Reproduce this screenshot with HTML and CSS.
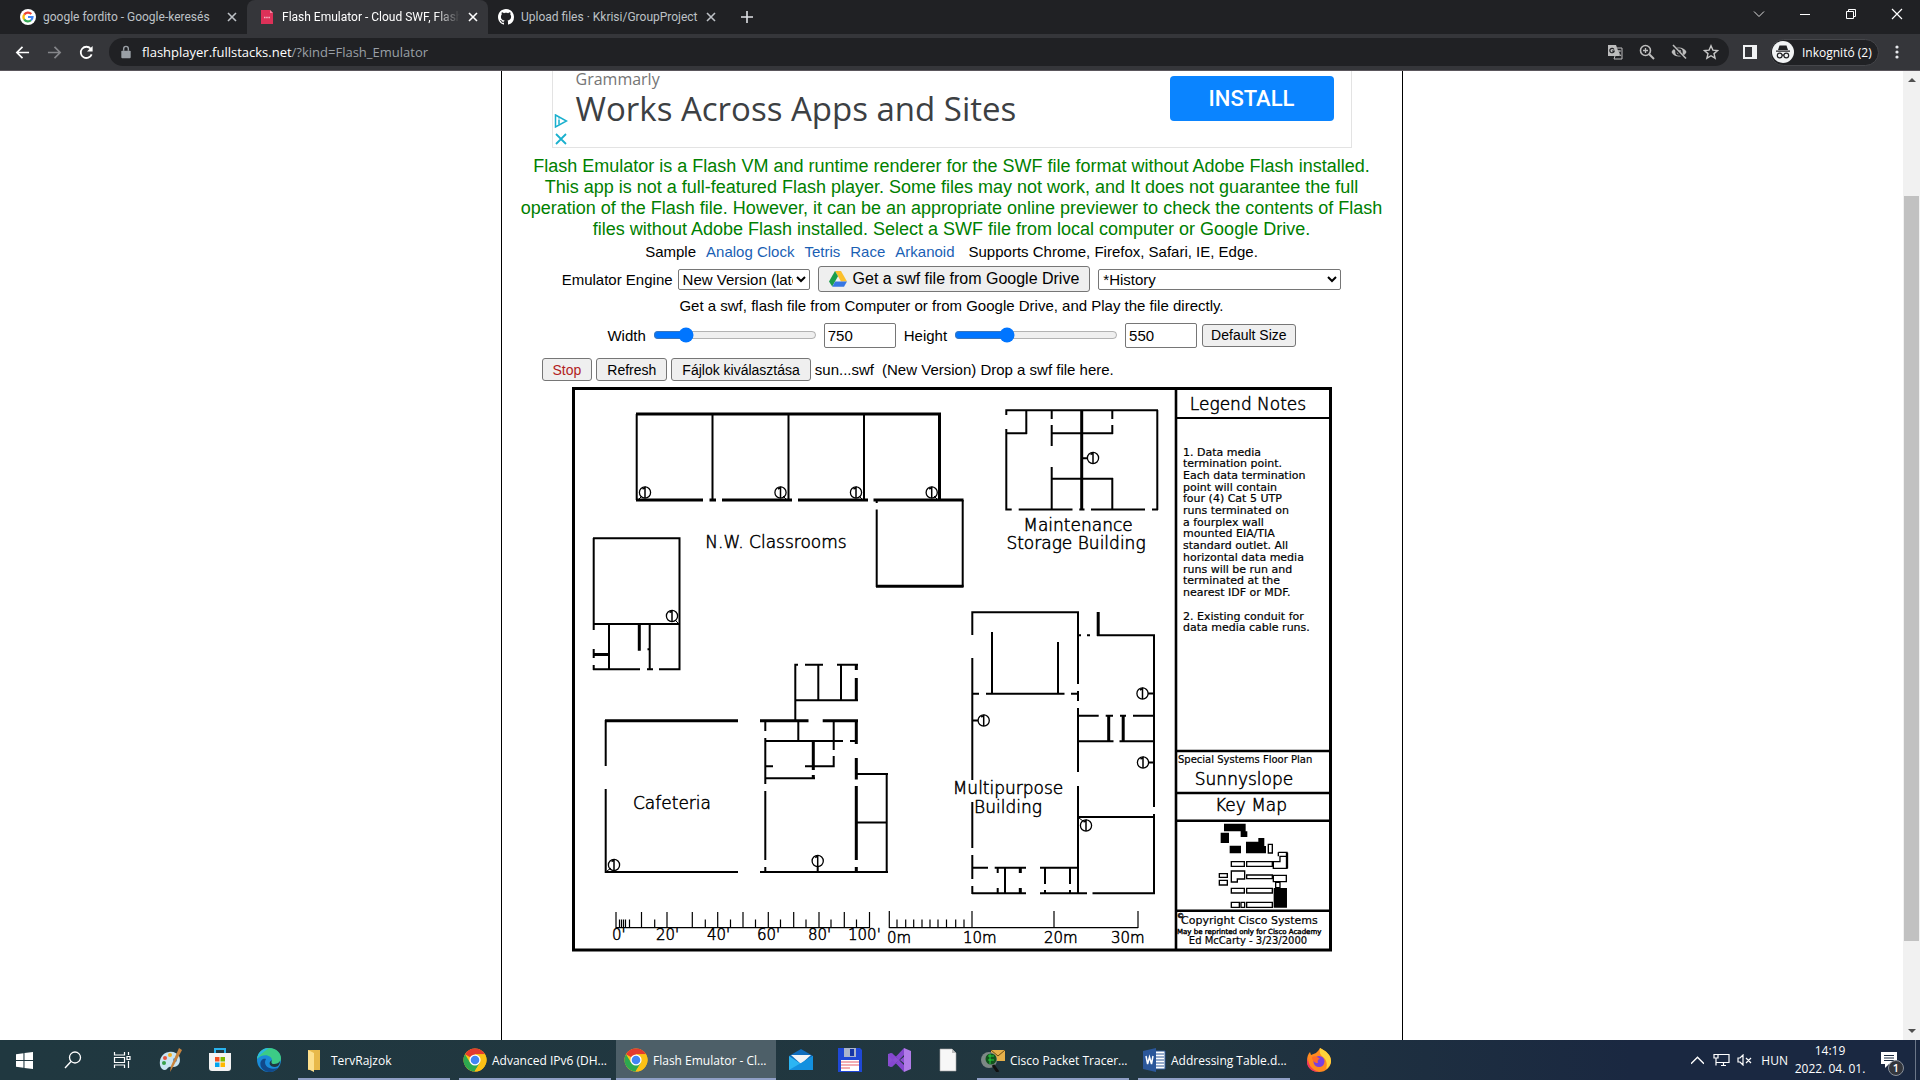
FILE: index.html
```html
<!DOCTYPE html>
<html lang="hu">
<head>
<meta charset="utf-8">
<title>Flash Emulator - Cloud SWF, Flash Player</title>
<link rel="stylesheet" href="styles.css">
</head>
<body>
<svg class="defs" aria-hidden="true">
  <symbol id="chrome" viewBox="0 0 24 24">
    <circle cx="12" cy="12" r="11.5" fill="#fbc116"/>
    <path d="M12 12 2 6.300A11.500 11.500 0 0 1 22 6.300H12z" fill="#e33b2e"/>
    <path d="M2 6.300A11.500 11.500 0 0 0 11.500 23.500L17 14.800 12 12 7.100 14.800z" fill="#2da94f"/>
    <path d="M12 6.300h10A11.500 11.500 0 0 1 11.500 23.500L17 14.800z" fill="#fbc116"/>
    <circle cx="12" cy="12" r="5.600" fill="#fff"/><circle cx="12" cy="12" r="4.300" fill="#4285f4"/>
  </symbol>
  <symbol id="x" viewBox="0 0 10 10"><path d="M1 1l8 8M9 1l-8 8" stroke="currentColor" stroke-width="1.600"/></symbol>
  <symbol id="sensor" viewBox="-8 -8 16 16"><circle r="5.600" fill="none" stroke="#000" stroke-width="1.300"/><path d="M-2.500-3.500 0-5V5.500" fill="none" stroke="#000" stroke-width="1.500"/></symbol>
</svg>

<header class="tabs">
  <div class="tab">
    <svg class="fav" viewBox="0 0 16 16"><circle cx="8" cy="8" r="8" fill="#fff"/><g fill="none" stroke-width="2.200"><path d="M4.200 5.600A4.500 4.500 0 0 1 11.300 5" stroke="#ea4335"/><path d="M4.200 10.400a4.500 4.500 0 0 1 0-4.800" stroke="#fbbc05"/><path d="M11 11.300a4.500 4.500 0 0 1-6.800-.9" stroke="#34a853"/><path d="M8 8h4.500A4.500 4.500 0 0 1 11 11.300" stroke="#4285f4"/></g></svg>
    <span class="tab-title">google fordito - Google-keresés</span>
    <button class="close" aria-label="Close tab"><svg><use href="#x"/></svg></button>
  </div>
  <div class="tab active">
    <svg class="fav" viewBox="0 0 16 16"><path d="M2 1h9l3 3v11H2z" fill="#dc3158"/><path d="M11 1v3h3z" fill="#f28aa2"/><path d="M5 8.500h6" stroke="#f5b5c4" stroke-width="1.500" stroke-dasharray="1.500 .7"/></svg>
    <span class="tab-title fade">Flash Emulator - Cloud SWF, Flash</span>
    <button class="close" aria-label="Close tab"><svg><use href="#x"/></svg></button>
  </div>
  <div class="tab last">
    <svg class="fav" viewBox="0 0 16 16"><path fill="#fff" d="M8 0C3.580 0 0 3.580 0 8c0 3.540 2.290 6.530 5.470 7.590.4.070.55-.17.55-.38 0-.19-.01-.82-.01-1.490-2.010.37-2.530-.49-2.690-.94-.09-.23-.48-.94-.82-1.130-.28-.15-.68-.52-.01-.53.63-.01 1.080.58 1.230.82.72 1.210 1.870.87 2.330.66.07-.52.28-.87.51-1.070-1.780-.2-3.640-.89-3.640-3.950 0-.87.31-1.590.82-2.150-.08-.2-.36-1.020.08-2.120 0 0 .67-.21 2.200.82.64-.18 1.320-.27 2-.27s1.360.09 2 .27c1.530-1.040 2.200-.82 2.200-.82.44 1.100.16 1.920.08 2.120.51.56.82 1.270.82 2.150 0 3.070-1.870 3.750-3.650 3.950.29.25.54.73.54 1.480 0 1.070-.01 1.930-.01 2.200 0 .21.15.46.55.38A8 8 0 0 0 16 8c0-4.420-3.580-8-8-8z"/></svg>
    <span class="tab-title">Upload files · Kkrisi/GroupProject</span>
    <button class="close" aria-label="Close tab"><svg><use href="#x"/></svg></button>
  </div>
  <button class="newtab" aria-label="New tab"><svg viewBox="0 0 12 12"><path d="M6 0v12M0 6h12" stroke="#dfe1e5" stroke-width="1.600"/></svg></button>
  <div class="winctl">
    <button aria-label="Search tabs"><svg viewBox="0 0 12 12"><path d="M1 3.500l5 5 5-5" fill="none" stroke="#ddd"/></svg></button>
    <button aria-label="Minimize"><svg viewBox="0 0 12 12"><path d="M1 6.500h10" stroke="#fff"/></svg></button>
    <button aria-label="Restore"><svg viewBox="0 0 12 12"><path d="M1.500 3.500h7v7h-7zM3.500 3.500v-2h7v7h-2" fill="none" stroke="#fff"/></svg></button>
    <button aria-label="Close"><svg viewBox="0 0 12 12"><path d="M1 1l10 10M11 1L1 11" stroke="#fff" stroke-width="1.200"/></svg></button>
  </div>
</header>

<nav class="toolbar">
  <button class="nav" aria-label="Back"><svg viewBox="0 0 16 16"><path d="M15 8H2M8 2L2 8l6 6" fill="none" stroke="#fff" stroke-width="1.800"/></svg></button>
  <button class="nav" aria-label="Forward"><svg viewBox="0 0 16 16"><path d="M1 8h13M8 2l6 6-6 6" fill="none" stroke="#85868a" stroke-width="1.800"/></svg></button>
  <button class="nav" aria-label="Reload"><svg viewBox="0 0 16 16"><path d="M13.500 10A6 6 0 1 1 12.500 4" fill="none" stroke="#fff" stroke-width="1.900"/><path d="M14.500 1v6h-6z" fill="#fff"/></svg></button>
  <div class="omni">
    <svg class="lock" viewBox="0 0 12 16"><rect x="1" y="6" width="10" height="8" rx="1" fill="#9aa0a6"/><path d="M3.500 6V4a2.500 2.500 0 0 1 5 0v2" fill="none" stroke="#9aa0a6" stroke-width="1.500"/></svg>
    <span class="url"><b>flashplayer.fullstacks.net</b>/?kind=Flash_Emulator</span>
    <div class="omni-icons">
      <svg viewBox="0 0 16 16"><path d="M1 1h8l4 11H1z" fill="#bdbdbd"/><path d="M10 4h5v11H7l1-3" fill="none" stroke="#bdbdbd"/><path d="M7 5.500A2.200 2.200 0 1 0 7.200 7H5" fill="none" stroke="#202124" stroke-width="1.200"/><path d="M10 7h4M12 6v1c0 2-1 3-2 4M11 8l3 4" fill="none" stroke="#bdbdbd"/></svg>
      <svg viewBox="0 0 16 16"><circle cx="6.500" cy="6.500" r="5" fill="none" stroke="#bdbdbd" stroke-width="1.600"/><path d="M10 10l5 5" stroke="#bdbdbd" stroke-width="2"/><path d="M6.500 4v5M4 6.500h5" stroke="#bdbdbd" stroke-width="1.300"/></svg>
      <svg viewBox="0 0 16 16"><path d="M.5 8C3 2 13 2 15.500 8 13 14 3 14 .5 8z" fill="#bdbdbd"/><circle cx="8" cy="8" r="3" fill="#bdbdbd" stroke="#202124" stroke-width="1.500"/><path d="M1 1l13.500 14" stroke="#202124" stroke-width="3"/><path d="M2 1l13 13.500" stroke="#bdbdbd" stroke-width="1.500"/></svg>
      <svg viewBox="0 0 16 16"><path d="M8 1.800l1.900 4.300 4.700.4-3.600 3.100 1.100 4.600L8 11.700l-4.100 2.500L5 9.600 1.400 6.500l4.700-.4z" fill="none" stroke="#c7c7c7" stroke-width="1.400"/></svg>
    </div>
  </div>
  <button class="side" aria-label="Side panel"><svg viewBox="0 0 14 14"><path fill="#f1f3f4" fill-rule="evenodd" d="M0 0h14v14H0zM2 2v10h7V2z"/></svg></button>
  <button class="profile"><svg viewBox="0 0 22 22"><circle cx="11" cy="11" r="11" fill="#f1f3f4"/><path d="M7.500 4.500h7L16 9H6z M4 9.500h14v1.300H4z" fill="#202124"/><g fill="none" stroke="#202124" stroke-width="1.200"><circle cx="7.700" cy="14.500" r="2.400"/><circle cx="14.300" cy="14.500" r="2.400"/><path d="M10 14.200h2"/></g></svg><span>Inkognitó (2)</span></button>
  <button class="menu" aria-label="Menu"><svg viewBox="0 0 4 14"><g fill="#e8eaed"><circle cx="2" cy="2" r="1.600"/><circle cx="2" cy="7" r="1.600"/><circle cx="2" cy="12" r="1.600"/></g></svg></button>
</nav>

<div class="viewport">
<main>
  <div class="page">
    <section class="ad">
      <div class="ad-marks">
        <svg viewBox="0 0 14 14"><path d="M1.500 1l11 6-11 6z" fill="none" stroke="#1ab0ce" stroke-width="1.500"/><path d="M5 5.500v5M5 3.500v1" stroke="#1ab0ce" stroke-width="1.500"/></svg>
        <svg viewBox="0 0 14 14"><path d="M2 2l10 10M12 2L2 12" stroke="#1ab0ce" stroke-width="1.800"/></svg>
      </div>
      <div class="ad-text"><span class="brand">Grammarly</span><span class="headline">Works Across Apps and Sites</span></div>
      <button class="install">INSTALL</button>
    </section>
    <p class="intro">Flash Emulator is a Flash VM and runtime renderer for the SWF file format without Adobe Flash installed. This app is not a full-featured Flash player. Some files may not work, and It does not guarantee the full operation of the Flash file. However, it can be an appropriate online previewer to check the contents of Flash files without Adobe Flash installed. Select a SWF file from local computer or Google Drive.</p>
    <p class="samples"><span>Sample</span><a href="#">Analog Clock</a><a href="#">Tetris</a><a href="#">Race</a><a href="#">Arkanoid</a><span class="supports">Supports Chrome, Firefox, Safari, IE, Edge.</span></p>
    <div class="row engine">
      <label for="eng">Emulator Engine</label>
      <select id="eng" class="sel-eng"><option>New Version (latest)</option></select>
      <button class="btn drive"><svg viewBox="0 0 18 18"><path d="M6 1h6l6 10.500h-6z" fill="#fbc02d"/><path d="M6 1l3 5.300L3.200 16.500 0 11.500z" fill="#1b9e4b"/><path d="M6.200 11.500H18L15 16.800H3.200z" fill="#3777e3"/></svg>Get a swf file from Google Drive</button>
      <select class="sel-hist" aria-label="History"><option>*History</option></select>
    </div>
    <p class="hint">Get a swf, flash file from Computer or from Google Drive, and Play the file directly.</p>
    <div class="row sizes">
      <label for="w">Width</label><input id="w" type="range" min="0" max="100" value="17">
      <input class="num" type="text" value="750" aria-label="Width in pixels">
      <label for="h">Height</label><input id="h" type="range" min="0" max="100" value="30">
      <input class="num" type="text" value="550" aria-label="Height in pixels">
      <button class="btn">Default Size</button>
    </div>
    <div class="row files">
      <button class="btn stop">Stop</button>
      <button class="btn">Refresh</button>
      <label class="btn" for="file">Fájlok kiválasztása</label><input class="hidden" id="file" type="file">
      <span class="status"><span>sun...swf</span><span>(New Version) Drop a swf file here.</span></span>
    </div>
    <svg class="plan" width="764" height="568" viewBox="570 387 764 568" role="img" aria-label="Floor plan">
      <g fill="none" stroke="#000" stroke-width="2">
        <rect x="573.500" y="389.500" width="757" height="561.500" stroke-width="3"/>
        <path stroke-width="2.600" d="M1176 390V951M1176 752H1330M1176 794H1330M1176 821.700H1330M1176 911.700H1330"/>
        <path d="M1176 419H1330"/>
        <!-- N.W. classrooms -->
        <path stroke-width="3" d="M636 415H941M939.500 415V501M636 501H703M709.500 501H716M722 501H792M798 501H868M873.500 501H963.500M876 587.300H963.500"/>
        <path d="M636.700 415V501M712.500 415V501M788.500 415V501M864 415V501M876.700 501V504M876.700 510.500V588M962.700 501V588"/>
        <!-- west annex -->
        <path d="M593 539.300H680.500M593.700 539V631M593.700 650V659M593.700 666V671M679.500 539V671M593 625H680M609 625V671M649.700 625V670M647.500 650.300h2M593 670.300H640M647 670.300H653M659 670.300H680.500"/>
        <path stroke-width="3" d="M593 655.500H609M639.300 625V651.700"/>
        <!-- maintenance -->
        <path d="M1006.300 411V416M1006.300 430V511M1005.300 411.300H1158M1157.300 411V511M1005.300 510.500H1011.700M1018.700 510.500H1072.500M1079.300 510.500H1084.500M1091 510.500H1145M1152 510.500H1158M1026.300 411V435M1006 434.300H1027M1051.700 411V420M1051.700 426V447M1051.700 468V510M1051.700 434.300H1113M1112.300 411V420M1112.300 426V435M1051 479.700H1113M1112.300 479V510M1083 459.300H1087"/>
        <path stroke-width="3" d="M1081.700 411V511"/>
        <!-- multipurpose -->
        <path d="M972.300 613V636M972.300 659V781M972.300 803V849M972.300 856V880M972.300 887V895M971.300 613.300H1079M1078 613V685M1078 692V702M1078 709V773M1078 787V895M992 633V695M1058 643V695M972 694.700H979M986 694.700H1064.500M1071 694.700H1078M1078 636.200h3M1087 636.200h3M1097 636.200H1155M1154 636V808M1154 815V895M1078 716.700H1098.700M1105.700 716.700H1113M1120 716.700H1126M1133 716.700H1154M1078 742.300H1113.500M1119.500 742.300H1154M1078 818H1154M972 868.700H988M994.700 868.700H1026M1040 868.700H1078M972 894.300H1026M1040 894.300H1087M1092.500 894.300H1155M1005 869V894M997.700 869V874M997.700 889V894M1045 869V885M1045 891V894M1070 869V885M1070 891V894M973 721.500h5M1148 694.500h6M1148 763.500h6"/>
        <path stroke-width="3" d="M1098.200 613V637M1108.700 716V742M1123.200 716V742M1020.300 869V874M1020.300 889V894"/>
        <!-- cafeteria -->
        <path stroke-width="3" d="M605 721.700H738M760 721.700H808.500M822.700 721.700H858M856.300 665V671M856.300 679V702M856.300 721V745M856.300 759V780.500M856.300 787V861M856.300 868V873M813.300 742V771M813.300 776V780"/>
        <path d="M605.700 721V767M605.700 790V874M605 873H738M760 873H888M765.300 721V732M765.300 739V785M765.300 792V861M765.300 868V873M795.300 665V721M794.300 665.700H798M805 665.700H823M837 665.700H858M818.300 666V701M841 666V701M795 701.300H858M798.300 722V742M765 742H843M850 742H856M833.700 721V751M833.700 757V768M765 767.300H773M805 767.300H834.700M765 779.300H815M856 775H888M886.700 775V873M856 823.500H887M817.700 867V873"/>
        <!-- scale bars -->
        <path stroke-width="1.200" d="M616 928.700H870M889.300 928.700H1138M616 913V929M641.500 913V929M667 913V929M692.300 913V929M717.700 913V929M743 913V929M768.300 913V929M793.700 913V929M819 913V929M844.300 913V929M869.500 913V929M654.700 920.500V929M705.300 920.500V929M730.500 920.500V929M755.500 920.500V929M780.500 920.500V929M806 920.500V929M831 920.500V929M856.500 920.500V929M619.500 920.500V929M621.500 920.500V929M623.500 920.500V929M625.500 920.500V929M629.500 920.500V929M889.300 912V929M897 920.500V929M905.700 920.500V929M913.700 920.500V929M922 920.500V929M930 920.500V929M938 920.500V929M946.500 920.500V929M955.700 920.500V929M964 920.500V929M972 912V929M1054 912V929M1138 912V929"/>
        <path stroke-width="1" d="M638 501l4-4M787 501l-4-4M863 501l-4-4M938 501l-4-4M678 624l-3-3M607 872l4-3M1079 819l4 3"/>
      </g>
      <g>
        <use href="#sensor" x="637" y="485.500" width="16" height="16"/><use href="#sensor" x="772.500" y="485.500" width="16" height="16"/><use href="#sensor" x="848" y="485.500" width="16" height="16"/><use href="#sensor" x="923.700" y="485.500" width="16" height="16"/><use href="#sensor" x="664" y="609" width="16" height="16"/><use href="#sensor" x="1085" y="451" width="16" height="16"/><use href="#sensor" x="975.700" y="713.500" width="16" height="16"/><use href="#sensor" x="1134.500" y="686.500" width="16" height="16"/><use href="#sensor" x="1135" y="755.500" width="16" height="16"/><use href="#sensor" x="1078" y="818.500" width="16" height="16"/><use href="#sensor" x="606" y="858" width="16" height="16"/><use href="#sensor" x="809.700" y="854" width="16" height="16"/>
      </g>
      <g class="names">
        <text x="776" y="549" text-anchor="middle">N.W. Classrooms</text>
        <text x="672" y="810" text-anchor="middle">Cafeteria</text>
        <text x="1078" y="532" text-anchor="middle">Maintenance</text>
        <text x="1076" y="550" text-anchor="middle">Storage Building</text>
        <text x="1008" y="795" text-anchor="middle">Multipurpose</text>
        <text x="1008" y="814" text-anchor="middle">Building</text>
        <text x="1248" y="411" text-anchor="middle">Legend Notes</text>
        <text x="1244" y="786" text-anchor="middle">Sunnyslope</text>
        <text x="1251" y="812" text-anchor="middle">Key Map</text>
      </g>
      <g class="scale">
        <text x="612" y="941">0'</text><text x="656" y="941">20'</text><text x="707" y="941">40'</text><text x="757" y="941">60'</text><text x="808" y="941">80'</text><text x="848" y="941">100'</text>
        <text x="887" y="944">0m</text><text x="963" y="944">10m</text><text x="1044" y="944">20m</text><text x="1111" y="944">30m</text>
      </g>
      <g class="notes">
        <text x="1183" y="457">1. Data media</text><text x="1183" y="468">termination point.</text><text x="1183" y="480">Each data termination</text><text x="1183" y="492">point will contain</text><text x="1183" y="503">four (4) Cat 5 UTP</text><text x="1183" y="515">runs terminated on</text><text x="1183" y="527">a fourplex wall</text><text x="1183" y="538">mounted EIA/TIA</text><text x="1183" y="550">standard outlet. All</text><text x="1183" y="562">horizontal data media</text><text x="1183" y="574">runs will be run and</text><text x="1183" y="585">terminated at the</text><text x="1183" y="597">nearest IDF or MDF.</text>
        <text x="1183" y="621">2. Existing conduit for</text><text x="1183" y="632">data media cable runs.</text>
        <text x="1181" y="925">Copyright Cisco Systems</text>
      </g>
      <g class="credits">
        <text x="1178" y="764">Special Systems Floor Plan</text>
        <text x="1248" y="945" text-anchor="middle">Ed McCarty - 3/23/2000</text>
      </g>
      <g class="fine">
        <text x="1177" y="935">May be reprinted only for Cisco Academy</text>
        <text x="1177" y="919">©</text>
      </g>
      <g transform="translate(1160 740) scale(.3333)" stroke="#000" stroke-width="4">
        <path stroke="none" d="M192 254h65v23h5v17h-20v-17h-50zM182 281h25v31h-25zM209 320h34v23h-34zM258 308h37v-11h18v24h5v22h-60zM341 447h40v59h-40z"/>
        <path fill="none" d="M325 316h12v26h-12zM355 340h26v48h-41v-20h20v-16h20M355 340v12M214 368h39v14h-39zM260 368h77v14h-77zM214 396h40v24h-22v9h-18zM260 408h77v11h-77zM340 409h39v19h-39zM178 404h24v11h-24zM178 424h24v14h-24zM347 430h13v16h-13zM214 448h39v14h-39zM260 448h77v14h-77zM214 490h24v15h-24zM243 490h11v15h-11zM260 490h77v15h-77z"/>
        <path stroke-width="7" d="M381 341v47"/>
      </g>
    </svg>
  </div>
</main>
<div class="scroll"><i class="up"></i><i class="thumb"></i><i class="down"></i></div>
</div>

<footer class="taskbar">
  <button class="tb" aria-label="Start"><svg viewBox="0 0 16 16" width="17" height="17"><path fill="#fff" d="M0 2.200 7 1.200V7.500H0zM8 1 16 0v7.500H8zM0 8.500h7v6.300L0 13.800zM8 8.500h8V16l-8-1z"/></svg></button>
  <button class="tb" aria-label="Search"><svg viewBox="0 0 18 18" width="18" height="18"><circle cx="11" cy="6.500" r="5.500" fill="none" stroke="#fff" stroke-width="1.300"/><path d="M7 10.500L1 17" stroke="#fff" stroke-width="1.400"/></svg></button>
  <button class="tb" aria-label="Task view"><svg viewBox="0 0 18 18" width="18" height="18"><path d="M1.500 1v3h10V1M1.500 17v-3h10v3M1.500 6.500h10v5h-10zM15.500 1v3M15.500 10v7M14 5.500h3v3h-3z" fill="none" stroke="#fff" stroke-width="1.200"/></svg></button>
  <button class="tb" aria-label="Paint"><svg viewBox="0 0 24 24"><path d="M10 4C3 5 0 11 1 17c1 5 5 6 7 4 2-3 4-2 7-2 6-1 7-7 5-11-2-3-6-5-10-4z" fill="#c9e4f2"/><circle cx="6" cy="10" r="2" fill="#e5533c"/><circle cx="11" cy="7" r="2" fill="#f5b324"/><circle cx="16" cy="12" r="2" fill="#3d86d8"/><circle cx="5" cy="15" r="2" fill="#37a04a"/><path d="M20 0l3 2-9 17-3 5 1-6z" fill="#c9843e"/></svg></button>
  <button class="tb" aria-label="Store"><svg viewBox="0 0 24 24"><path d="M7 6V1h10v5" fill="none" stroke="#29b3ee" stroke-width="2"/><path d="M1 5h22v15a3 3 0 0 1-3 3H4a3 3 0 0 1-3-3z" fill="#f3f3f3"/><path d="M7 9h4.500v4.500H7z" fill="#f25022"/><path d="M12.500 9H17v4.500h-4.500z" fill="#7fba00"/><path d="M7 14.500h4.500V19H7z" fill="#00a4ef"/><path d="M12.500 14.500H17V19h-4.500z" fill="#ffb900"/></svg></button>
  <button class="tb" aria-label="Edge"><svg viewBox="0 0 24 24"><circle cx="12" cy="12" r="12" fill="#1a8bd8"/><path d="M0 11C1 3 7 0 12 0c8 0 12 6 12 10 0 5-4 6-7 6-3 0-3-2-2-4 0-4-8-8-15-1z" fill="#3ccb86"/><path d="M0 11C1 4 6 0 12 0c-4 3-8 5-12 11z" fill="#2bb7e4"/><path d="M9 11c-3 5 1 12 12 9-5 6-14 5-17-1-2-5 1-9 5-8z" fill="#114a8b"/><path d="M15 12c-1 2-1 4 2 4 3 0 5-1 6-3 0 3-2 6-5 6-6 0-7-5-3-7z" fill="#203840"/></svg></button>
  <button class="task"><svg viewBox="0 0 24 24"><path d="M6 2h12v20H6z" fill="#e8b94a"/><path d="M6 2l6 3v19l-6-3z" fill="#fde08d"/></svg><span>TervRajzok</span></button>
  <button class="task"><svg><use href="#chrome"/></svg><span>Advanced IPv6 (DH...</span></button>
  <button class="task on"><svg><use href="#chrome"/></svg><span>Flash Emulator - Cl...</span></button>
  <button class="tb" aria-label="Mail"><svg viewBox="0 0 24 24"><path d="M0 8l12-7 12 7v14H0z" fill="#0f6cbd"/><path d="M2 7h20l-10 9z" fill="#f1f3f6"/><path d="M0 8l12 8 12-8v14H0z" fill="#2bb5f3"/><path d="M24 8v14H0z" fill="#1390df"/></svg></button>
  <button class="tb" aria-label="Files"><svg viewBox="0 0 24 24"><path d="M0 0h22l2 2v22H0z" fill="#1f48d6"/><path d="M6 0h12v9H6z" fill="#aab4cc"/><path d="M12 1h4v7h-4z" fill="#1636a5"/><path d="M3 12h18v11H3z" fill="#fff"/><path d="M3 14h18M3 17h18M3 20h9" stroke="#f0939a" stroke-width="1.500"/></svg></button>
  <button class="tb" aria-label="Visual Studio"><svg viewBox="0 0 24 24"><path d="M1 6l3-1 14 11V8L4 19l-3-1z" fill="#8a4fd0"/><path d="M17 0l7 3v18l-7 3z" fill="#b17be8"/><path d="M17 0v7L5 19l-4-2z M17 24v-7L5 5 1 7z" fill="#8547cf"/></svg></button>
  <button class="tb" aria-label="Document"><svg viewBox="0 0 24 24"><path d="M4 1h12l4 4v18H4z" fill="#f7f7f7" stroke="#aaa" stroke-width=".6"/><path d="M16 1v4h4z" fill="#bbb"/></svg></button>
  <button class="task"><svg viewBox="0 0 24 24"><path d="M10 2h14v11H10z" fill="#e6b04a"/><path d="M10 2l7 6 7-6" fill="none" stroke="#6b4a12"/><circle cx="8" cy="12" r="8" fill="#7d8886"/><circle cx="10" cy="11" r="5.500" fill="#12541c"/><path d="M7 8h6M7 12h6M9 6v10" stroke="#28d03c"/><path d="M12 17l5 7" stroke="#111" stroke-width="3"/></svg><span>Cisco Packet Tracer...</span></button>
  <button class="task"><svg viewBox="0 0 24 24"><path d="M12 3h11v18H12z" fill="#fff" stroke="#2b579a"/><path d="M14 6h8M14 9h8M14 12h8M14 15h8M14 18h8" stroke="#2b579a"/><path d="M1 3l13-3v24L1 21z" fill="#2b579a"/><path d="M4 8l1.600 8L7.500 9l2 7L11 8" fill="none" stroke="#fff" stroke-width="1.500"/></svg><span>Addressing Table.d...</span></button>
  <button class="tb" aria-label="Firefox"><svg viewBox="0 0 24 24"><path d="M13 0c6 3 11 7 11 13s-5 11-12 11S0 19 0 13c0-4 1-7 3-9l1 3 5-2c1-1 3-3 4-5z" fill="#ff8a1e"/><path d="M13 0c6 3 11 7 11 13 0 4-3 7-5 8 2-5 0-10-3-12-3-2-4-5-3-9z" fill="#ffd23a"/><path d="M1 10c0 7 4 12 11 14C5 24 0 20 0 14z" fill="#f2355b"/><circle cx="12" cy="13.500" r="5.500" fill="#7a3fe0"/><path d="M5 9c3-2 6 0 8 2-2 0-3 2-2 4-3 0-6-2-6-6z" fill="#ff6a2a"/></svg></button>
  <div class="tray">
    <svg viewBox="0 0 12 12" width="13" height="13"><path d="M0 9l6-6 6 6" fill="none" stroke="#fff" stroke-width="1.300"/></svg>
    <svg viewBox="0 0 17 14" width="17" height="14"><path d="M5 1.500h11v8H3.500M3 5v7.500M8 12.500h5M10.500 9.500v3M1 1.500h4V5H1z" fill="none" stroke="#fff" stroke-width="1.200"/></svg>
    <svg viewBox="0 0 15 12" width="15" height="12"><path d="M1 4h2l3-3v10L3 8H1zM9 4l5 5M14 4L9 9" fill="none" stroke="#fff" stroke-width="1.200"/></svg>
    <span class="lang">HUN</span>
    <span class="clock"><span>14:19</span><span>2022. 04. 01.</span></span>
    <button class="notif" aria-label="Notifications"><svg viewBox="0 0 16 16" width="16" height="16"><path d="M0 0h16v12H8l-4 4v-4H0z" fill="#fff"/><path d="M3 3.500h10M3 6h10M3 8.500h10" stroke="#1b2a40"/></svg><span class="badge">1</span></button>
  </div>
</footer>
</body>
</html>
```
FILE: styles.css
```css
* { box-sizing: border-box; }
body {
  margin: 0;
  height: 100vh;
  display: flex;
  flex-direction: column;
  overflow: hidden;
  font-family: "Liberation Sans", Arial, sans-serif;
  font-size: 15px;
  color: #000;
  background: #fff;
}
button { font: inherit; cursor: pointer; }
p { margin: 0; }
.defs { display: none; }

/* browser tabs */
.tabs, .toolbar, .taskbar { font-family: "Open Sans", "Noto Sans", sans-serif; font-size: 12px; flex: none; display: flex; }
.tabs button, .toolbar button, .taskbar button { border: 0; background: none; padding: 0; color: inherit; display: flex; align-items: center; justify-content: center; }
.tabs { height: 34px; background: #202124; color: #bdc1c6; align-items: stretch; font-family: Roboto, sans-serif; }
.tab { width: 247px; padding: 0 9px 6px 20px; display: flex; align-items: center; gap: 7px; }
.tab.active { width: 241px; padding-left: 12px; background: #35363a; color: #fff; border-radius: 8px 8px 0 0; }
.tab.last { width: 238px; padding-left: 10px; }
.fav { width: 16px; height: 16px; flex: none; margin-top: 6px; }
.tab-title { flex: 1; min-width: 0; white-space: nowrap; overflow: hidden; margin-top: 6px; }
.fade { -webkit-mask-image: linear-gradient(90deg, #000 86%, transparent); mask-image: linear-gradient(90deg, #000 86%, transparent); }
.tabs .close { width: 12px; height: 16px; margin-top: 6px; }
.close svg { width: 10px; height: 10px; }
.newtab { width: 42px; }
.newtab svg { width: 12px; height: 12px; }
.winctl { margin-left: auto; display: flex; height: 28px; }
.winctl button { width: 46px; }
.winctl svg { width: 12px; height: 12px; }

/* toolbar */
.toolbar { height: 37px; background: #35363a; border-bottom: 1px solid #5a565c; align-items: center; color: #fff; padding: 0 6px; }
.nav { width: 32px; }
.nav svg { width: 15px; height: 15px; }
.omni { flex: 1; height: 28px; margin-left: 7px; border-radius: 14px; background: #202124; display: flex; align-items: center; padding: 0 10px; }
.lock { width: 12px; height: 15px; margin: 0 10px 0 1px; }
.url { color: #9aa0a6; font-size: 13px; }
.url b { font-weight: 400; color: #fff; }
.omni-icons { margin-left: auto; display: flex; gap: 16px; }
.omni-icons svg { width: 16px; height: 16px; }
.side { width: 41px; }
.side svg { width: 14px; height: 14px; }
.toolbar .profile { height: 27px; width: 109px; border: 1px solid #45464a; border-radius: 14px; background: #202124; gap: 8px; justify-content: flex-start; padding-left: 1px; white-space: nowrap; }
.profile svg { width: 22px; height: 22px; flex: none; }
.menu { width: 35px; }
.menu svg { width: 4px; height: 14px; }

/* page */
.viewport { flex: 1; min-height: 0; display: flex; }
main { flex: 1; overflow: hidden; }
.page {
  max-width: 902px;
  min-height: 100%;
  margin: 0 auto;
  border: solid #000;
  border-width: 0 1px;
  display: flex;
  flex-direction: column;
  align-items: center;
}
.ad { width: 800px; height: 77px; border: 1px solid #e3e3e3; border-top: 0; display: flex; align-items: flex-start; padding-right: 17px; }
.ad-marks { width: 23px; display: flex; flex-direction: column; gap: 4px; padding: 43px 0 0 1px; }
.ad-marks svg { width: 14px; height: 14px; }
.ad-text { font-family: "Open Sans", sans-serif; display: flex; flex-direction: column; }
.brand { color: #757575; font-size: 16px; line-height: 16px; }
.headline { color: #3c4043; font-size: 33px; line-height: 44px; }
.install { margin: 5px 0 0 auto; width: 164px; height: 45px; border: 0; border-radius: 4px; background: #0a84ff; color: #fff; font-family: Roboto, sans-serif; font-size: 22px; font-weight: 500; }
.intro { width: 868px; margin-top: 8px; color: #008000; font-size: 18px; line-height: 21px; text-align: center; }
.samples { display: flex; gap: 10px; margin-top: 2px; line-height: 20px; }
.samples a { color: #1a5fb4; text-decoration: none; }
.supports { margin-left: 4px; }
.row { display: flex; align-items: center; }
.engine { margin-top: 4px; height: 26px; }
select, .num { font: inherit; background: #fff; border: 1px solid #767676; border-radius: 2px; color: #000; }
select { height: 21px; padding: 0; }
.sel-eng { width: 132px; margin: 0 8px 0 5px; }
.sel-hist { width: 243px; margin-left: 8px; }
.btn { height: 23px; padding: 0 8px; border: 1px solid #767676; border-radius: 3px; background: #efefef; color: #000; font-size: 14px; display: flex; align-items: center; white-space: nowrap; }
.drive { height: 26px; padding: 0 10px; font-size: 16px; gap: 6px; }
.drive svg { width: 18px; height: 18px; }
.hint { margin-top: 4px; line-height: 20px; }
.sizes { margin-top: 6px; height: 26px; }
input[type=range] { width: 164px; height: 16px; margin: 0 7px; }
.num { width: 72px; height: 25px; padding: 1px 3px; margin-right: 8px; }
.num + .btn { margin-left: -3px; }
.files { width: 820px; margin-top: 10px; height: 23px; gap: 4px; }
.files .btn { padding: 0 10px; }
.stop { color: #b22222; }
.hidden { position: absolute; width: 1px; height: 1px; opacity: 0; }
.status { display: flex; gap: 8px; }

/* floor plan lettering */
.plan { margin-top: 5px; flex: none; }
.plan text { font-family: "DejaVu Sans", sans-serif; stroke: #000; }
.names, .scale { font-weight: 200; stroke-width: 0.5px; }
.names { font-size: 17px; }
.scale { font-size: 15px; }
.notes { font-size: 11px; stroke-width: 0.2px; }
.credits { font-size: 10px; stroke-width: 0.2px; }
.fine { font-size: 7px; stroke-width: 0.4px; }

/* scrollbar */
.scroll { width: 17px; background: #f1f1f1; display: flex; flex-direction: column; align-items: center; padding: 7px 0; }
.up, .down { border: 4px solid transparent; }
.up { border-top: 0; border-bottom-color: #505050; }
.down { border-bottom: 0; border-top-color: #505050; margin-top: auto; }
.thumb { width: 15px; height: 78%; margin-top: 114px; background: #c1c1c1; }

/* taskbar */
.taskbar { height: 40px; background: linear-gradient(90deg, #203840, #21363f 60%, #1a2841 85%, #1a2841); color: #fff; gap: 1px; padding-right: 4px; }
.tb { width: 48px; }
.tb svg:not([width]) { width: 24px; height: 24px; }
.taskbar .task { width: 160px; padding: 0 8px; justify-content: flex-start; gap: 5px; white-space: nowrap; background: linear-gradient(#8f9fc5, #8f9fc5) center bottom / 152px 2px no-repeat; }
.taskbar .task.on { background: #4d5f68; border-bottom: 2px solid #8f9fc5; padding-top: 2px; }
.task svg { width: 24px; height: 24px; flex: none; }
.task span { font-size: 12px; }
.tray { margin-left: auto; display: flex; align-items: center; border-right: 1px solid #6b7688; }
.tray > svg:first-child { margin-right: 9px; }
.tray > svg + svg + svg { margin-left: 7px; }
.lang { margin-left: 9px; }
.clock { display: flex; flex-direction: column; align-items: center; width: 66px; margin-left: 9px; line-height: 18px; white-space: nowrap; }
.taskbar .notif { width: 52px; height: 40px; position: relative; }
.badge { position: absolute; right: 11px; bottom: 4px; width: 16px; height: 16px; border-radius: 8px; border: 1px solid #8a919c; background: #33363c; font-size: 11px; line-height: 14px; font-weight: 600; text-align: center; }
```
